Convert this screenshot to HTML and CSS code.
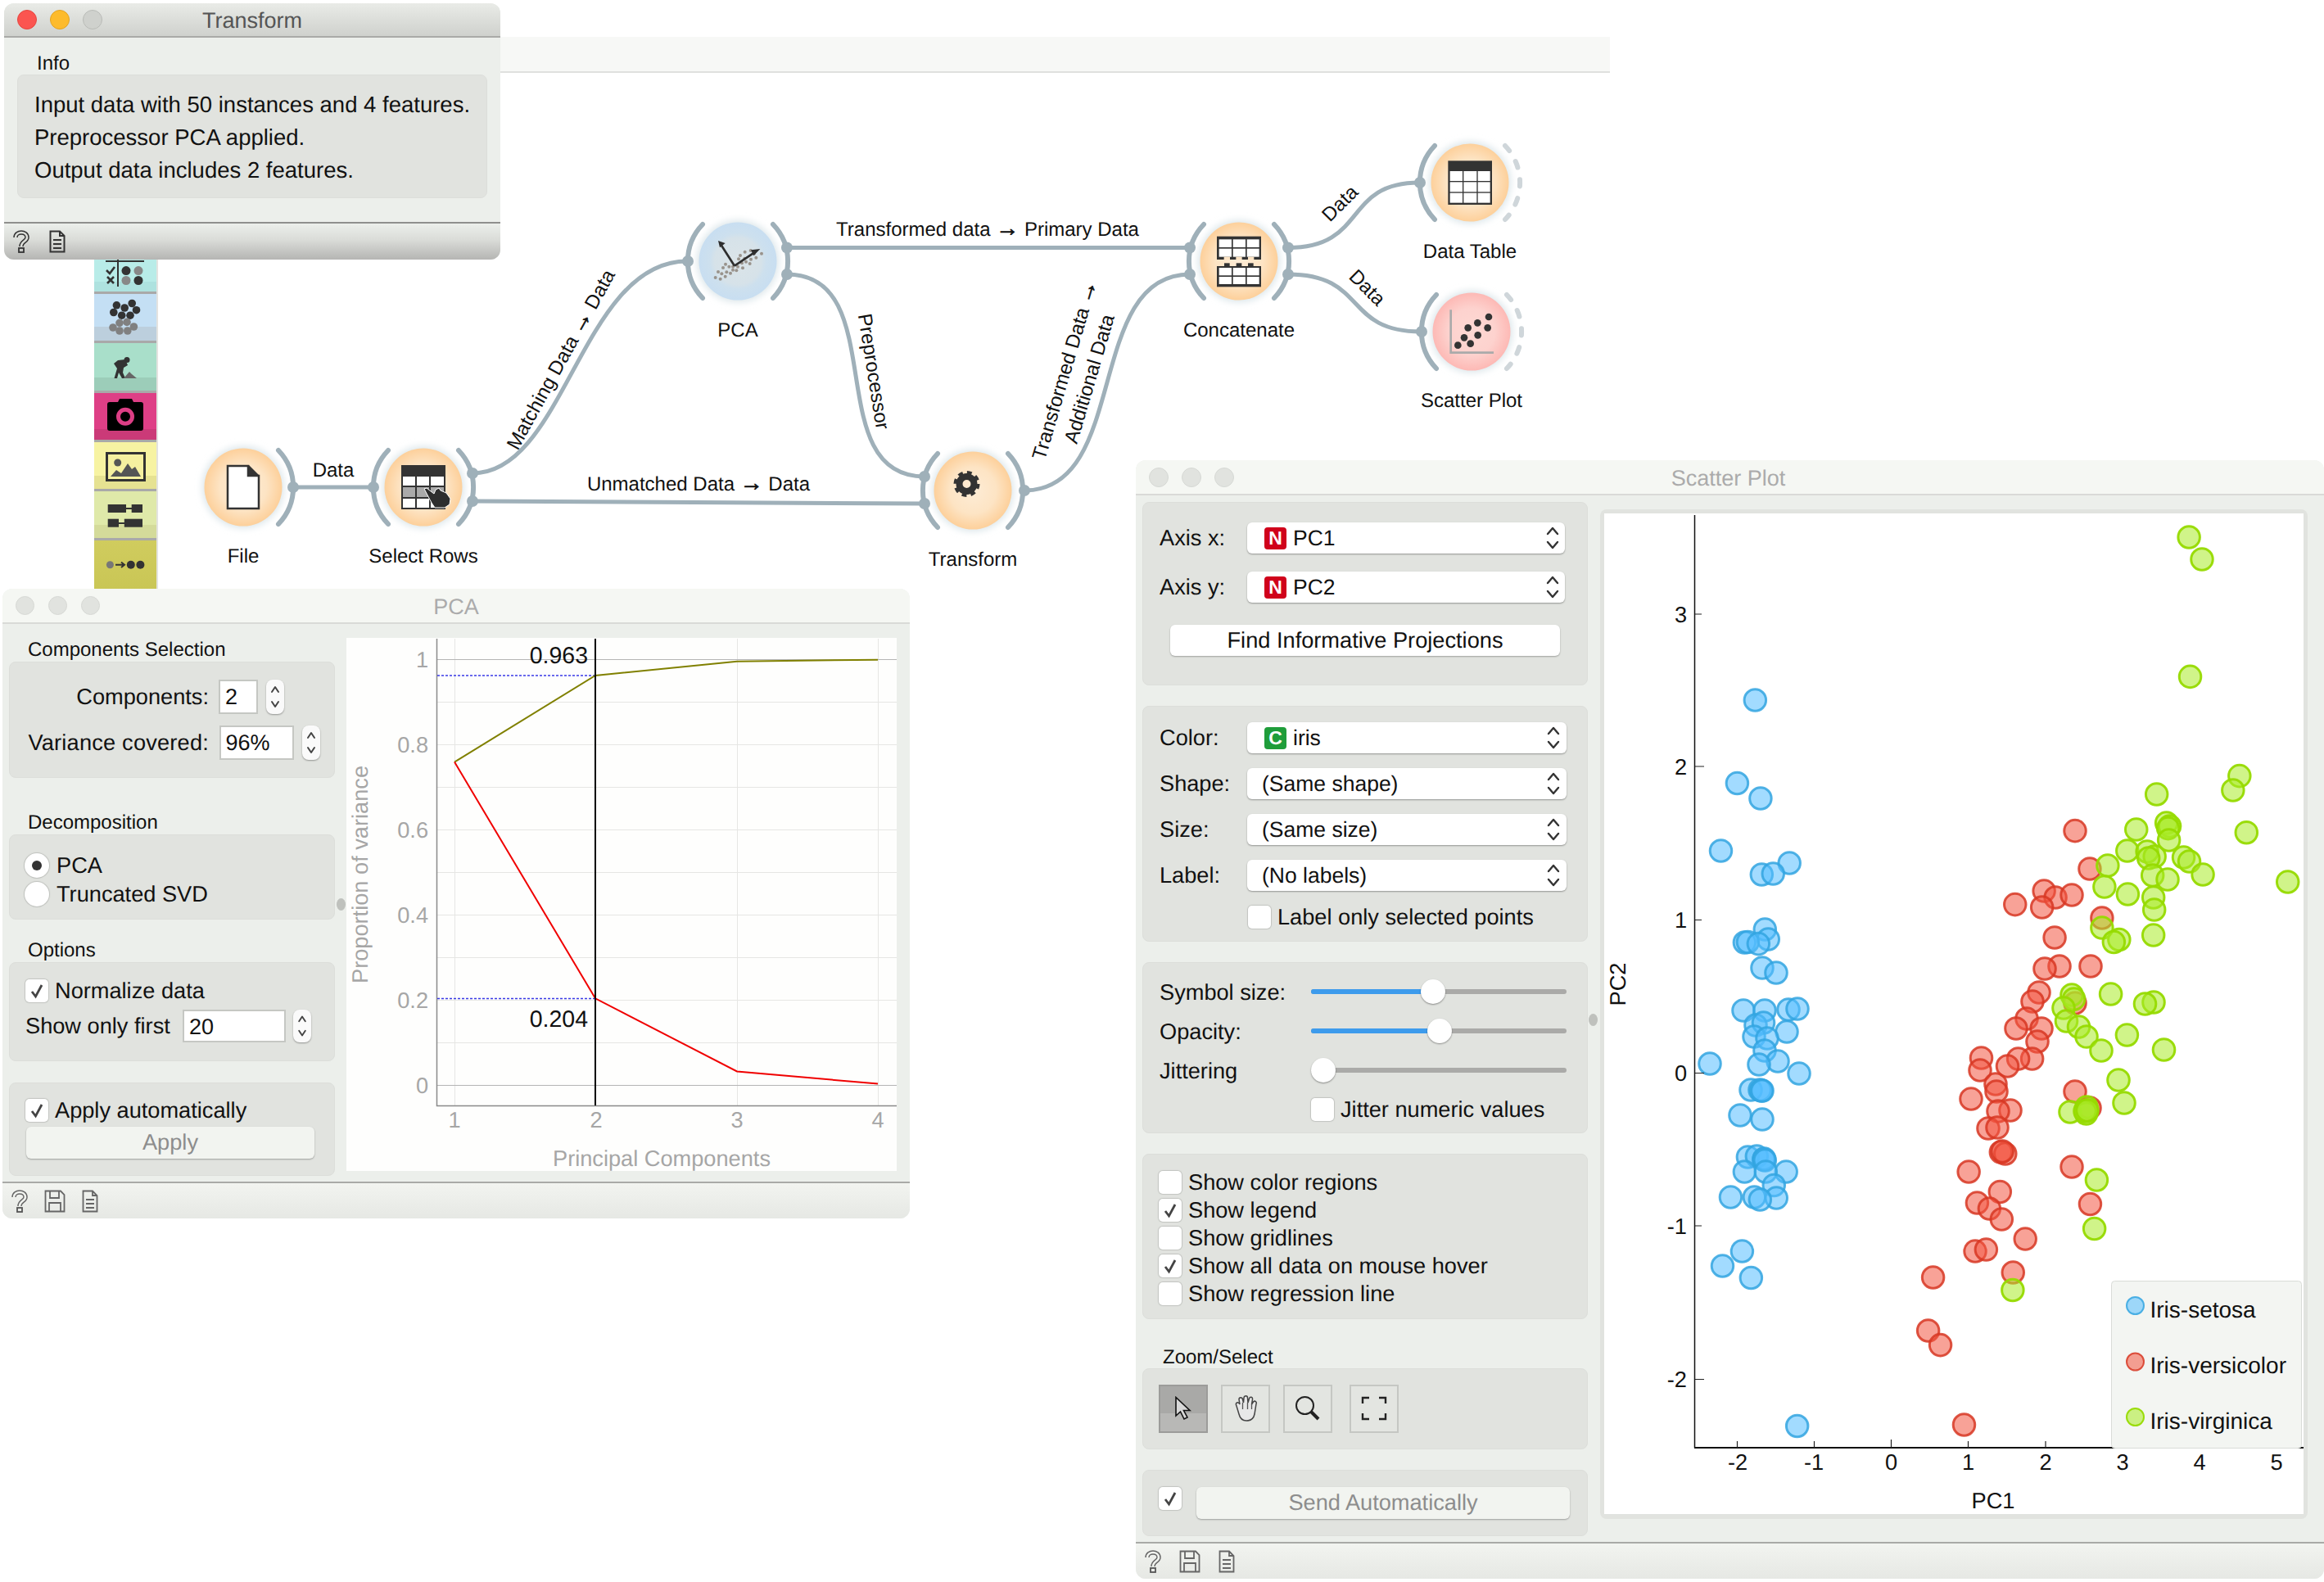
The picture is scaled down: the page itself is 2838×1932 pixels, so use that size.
FILE: index.html
```html
<!DOCTYPE html>
<html lang="en">
<head>
<meta charset="utf-8">
<title>Orange workflow</title>
<link rel="stylesheet" href="styles.css">
</head>
<body>
<svg class="defs" width="0" height="0" aria-hidden="true">
  <defs>
    <radialGradient id="gOrange"><stop offset="0" stop-color="#fdecd6"/><stop offset=".6" stop-color="#fde4c4"/><stop offset="1" stop-color="#fdd09b"/></radialGradient>
    <radialGradient id="gBlue"><stop offset="0" stop-color="#dbe4e8"/><stop offset=".6" stop-color="#d6e2e9"/><stop offset=".72" stop-color="#cde0ee"/><stop offset="1" stop-color="#c8def1"/></radialGradient>
    <radialGradient id="gPink"><stop offset="0" stop-color="#fdd8d3"/><stop offset=".6" stop-color="#fdd2ce"/><stop offset="1" stop-color="#fdb9b5"/></radialGradient>
    <filter id="soft" x="-30%" y="-30%" width="160%" height="160%"><feGaussianBlur stdDeviation="4"/></filter>
    <symbol id="chev" viewBox="0 0 16 30"><path d="M2 10 L8 3 L14 10 M2 20 L8 27 L14 20" fill="none" stroke="#333" stroke-width="2.4" stroke-linecap="round" stroke-linejoin="round"/></symbol>
    <symbol id="chevs" viewBox="0 0 22 42"><path d="M7 15 L11 9 L15 15 M7 27 L11 33 L15 27" fill="none" stroke="#444" stroke-width="2" stroke-linecap="round" stroke-linejoin="round"/></symbol>
    <symbol id="tick" viewBox="0 0 28 28"><path d="M8 15 L12.5 21 L20 7" fill="none" stroke="#444" stroke-width="2.8"/></symbol>
    <symbol id="help" viewBox="0 0 20 28"><path d="M3 9 C3 1 17 1 17 9 C17 14 10 13 10 20" fill="none" stroke="#666" stroke-width="5.5"/><path d="M3 9 C3 1 17 1 17 9 C17 14 10 13 10 20" fill="none" stroke="#f1f3ef" stroke-width="2.6"/><rect x="7" y="22" width="6" height="5" fill="none" stroke="#555" stroke-width="1.8"/></symbol>
    <symbol id="helpd" viewBox="0 0 20 28"><path d="M3 9 C3 1 17 1 17 9 C17 14 10 13 10 20" fill="none" stroke="#333" stroke-width="5.5"/><path d="M3 9 C3 1 17 1 17 9 C17 14 10 13 10 20" fill="none" stroke="#dcded9" stroke-width="2.6"/><rect x="7" y="22" width="6" height="5" fill="none" stroke="#333" stroke-width="1.8"/></symbol>
    <symbol id="doc" viewBox="0 0 20 28"><path d="M1.5 1.5 H13 L18.500 7 V26.500 H1.500 Z M13 1.500 V7 H18.500 M5 12 H15 M5 17 H15 M5 22 H15" fill="none" stroke="#666" stroke-width="1.8"/></symbol>
    <symbol id="docd" viewBox="0 0 20 28"><path d="M1.5 1.5 H13 L18.500 7 V26.500 H1.500 Z M13 1.500 V7 H18.500 M5 12 H15 M5 17 H15 M5 22 H15" fill="none" stroke="#333" stroke-width="2"/></symbol>
    <symbol id="save" viewBox="0 0 26 28"><path d="M1.500 1.500 H20 L24.500 6 V26.500 H1.500 Z M7 1.500 V10 H18 V1.500 M6 26.500 V16 H20 V26.500" fill="none" stroke="#666" stroke-width="1.8"/></symbol>
    <g id="arcL"><path d="M-43,-45 A65,65 0 0 0 -43,45" class="arc"/></g>
    <g id="arcR"><path d="M43,-45 A65,65 0 0 1 43,45" class="arc"/></g>
    <g id="arcD"><path d="M43,-45 A65,65 0 0 1 43,45" class="arcdash"/></g>
  </defs>
</svg>

<div class="toolbar"></div>

<aside class="sidebar">
  <div class="cat c1"><svg viewBox="0 0 76 42" width="76" height="42"><path d="M14 2 H61 M29 0 V33" stroke="#333" stroke-width="2" fill="none"/><path d="M15 13 L19 17 L25 9 M16 21 L24 29 M24 21 L16 29" stroke="#333" stroke-width="2.600" fill="none"/><circle cx="39" cy="13.600" r="5.500" fill="#333"/><circle cx="54" cy="13.600" r="5.500" fill="#888"/><circle cx="39" cy="25.500" r="5.500" fill="#888"/><circle cx="54" cy="25.500" r="5.500" fill="#333"/></svg></div>
  <div class="cat c2"><svg viewBox="0 0 76 60" width="76" height="60"><g fill="#333"><circle cx="27.400" cy="13.800" r="4.800"/><circle cx="46.200" cy="11.500" r="4.800"/><circle cx="37.200" cy="17" r="4.800"/><circle cx="51.500" cy="19.700" r="4.800"/><circle cx="23.800" cy="22.500" r="4.800"/><circle cx="33.700" cy="26.200" r="4.800"/><circle cx="44" cy="26.200" r="4.800"/></g><g fill="#808080"><circle cx="31" cy="35.300" r="4.800"/><circle cx="40" cy="34.400" r="4.800"/><circle cx="48.400" cy="40" r="4.800"/><circle cx="23" cy="41" r="4.800"/><circle cx="31" cy="45" r="4.800"/><circle cx="40.800" cy="45" r="4.800"/></g></svg></div>
  <div class="cat c3"><svg viewBox="0 0 76 61" width="76" height="61"><circle cx="40" cy="20.500" r="3.500" fill="#333"/><path d="M29 21 L38 20 L41 27 L36 30 L35 36 L38 43 L34 43 L30 36 L28 43 L24.500 43 L28 31 L24 25 Z" fill="#333"/><path d="M36 43 L43 35 L46 38 L52 43 Z" fill="#666"/></svg></div>
  <div class="cat c4"><svg viewBox="0 0 76 60" width="76" height="60"><path d="M19 11 H29 L31 7 H46 L48 11 H57 Q60 11 60 14 V43 Q60 46 57 46 H19 Q16 46 16 43 V14 Q16 11 19 11 Z" fill="#000"/><circle cx="38" cy="28.700" r="8.500" fill="none" stroke="#dd3e85" stroke-width="5"/></svg></div>
  <div class="cat c5"><svg viewBox="0 0 76 60" width="76" height="60"><rect x="15.500" y="13.500" width="46" height="33" fill="#f5f0a0" stroke="#333" stroke-width="3"/><circle cx="28.700" cy="25" r="4.500" fill="#555"/><path d="M20 42 L27 34 L33 38 L41 26 L46 33 L50 30 L57 42 Z" fill="#555"/></svg></div>
  <div class="cat c6"><svg viewBox="0 0 76 60" width="76" height="60"><g fill="#333"><rect x="16.700" y="16" width="22.300" height="10"/><rect x="45.700" y="16" width="13.300" height="10"/><rect x="39" y="20" width="7" height="2"/><rect x="16.700" y="33.700" width="13.300" height="10"/><rect x="36.800" y="33.700" width="22.200" height="10"/><rect x="30" y="38" width="7" height="2"/></g></svg></div>
  <div class="cat c7"><svg viewBox="0 0 76 61" width="76" height="61"><circle cx="19.400" cy="29.700" r="4.500" fill="#777"/><path d="M26 29.700 H36 M33 26.500 L37 29.700 L33 33" stroke="#333" stroke-width="2" fill="none"/><circle cx="44.800" cy="29.700" r="5" fill="#333"/><circle cx="56.400" cy="29.700" r="5" fill="#333"/></svg></div>
</aside>

<svg class="canvas" viewBox="0 0 2000 720" width="2000" height="720">
  <g class="edges">
    <path d="M358,595 H454"/>
    <path d="M577,578 C690,578 710,319 839,319"/>
    <path d="M577,612 L1129,615"/>
    <path d="M961,302.500 H1453"/>
    <path d="M961,335 C1090,335 1000,582 1129,582"/>
    <path d="M1251,599 C1380,599 1324,335 1453,335"/>
    <path d="M1573,302.500 C1670,302.500 1640,223 1733,223"/>
    <path d="M1573,335 C1670,335 1640,405 1735,405"/>
  </g>

  <g class="elabels">
    <text x="407" y="582">Data</text>
    <text x="1206" y="287.500">Transformed data <tspan class="arr">→</tspan> Primary Data</text>
    <text x="853" y="598.500">Unmatched Data <tspan class="arr">→</tspan> Data</text>
    <text transform="translate(692 443) rotate(-61)">Matching Data <tspan class="arr">→</tspan> Data</text>
    <text transform="translate(1059 455) rotate(81)">Preprocessor</text>
    <text transform="translate(1308 454) rotate(-73.500)">Transformed Data <tspan class="arr">→</tspan></text>
    <text transform="translate(1338 465) rotate(-73.500)">Additional Data</text>
    <text transform="translate(1642 254) rotate(-45)">Data</text>
    <text transform="translate(1664 357) rotate(45)">Data</text>
  </g>

  <g transform="translate(297 595)">
    <circle class="halo" r="50"/><circle r="47.500" fill="url(#gOrange)"/>
    <use href="#arcR"/><circle class="dot" cx="61" r="7"/>
    <path d="M-19,-26 H6 V-14 H19 V26 H-19 Z" fill="#fff" stroke="#333" stroke-width="2.500"/><path d="M7,-27 L19,-15 H7 Z" fill="#333"/>
  </g>

  <g transform="translate(517 595)">
    <circle class="halo" r="50"/><circle r="47.500" fill="url(#gOrange)"/>
    <use href="#arcL"/><use href="#arcR"/>
    <circle class="dot" cx="-61" r="7"/><circle class="dot" cx="60" cy="-17" r="7"/><circle class="dot" cx="60" cy="17" r="7"/>
    <rect x="-27" y="-27" width="54" height="54" fill="#333"/>
    <g fill="#fff"><rect x="-25" y="-13" width="15" height="11"/><rect x="-8" y="-13" width="15" height="11"/><rect x="9" y="-13" width="16" height="11"/><rect x="-25" y="14" width="15" height="11"/><rect x="-8" y="14" width="15" height="11"/><rect x="9" y="14" width="16" height="11"/></g>
    <g fill="#aaa"><rect x="-25" y="0" width="15" height="12"/><rect x="-8" y="0" width="15" height="12"/><rect x="9" y="0" width="16" height="12"/></g>
    <path d="M1,2 L4,1 L13,8 L15,3 L19,1 L21,4 L28,7 L33,14 L32,21 L26,25 L14,25 L10,19 Z" fill="#2e2e2e" stroke="#fff" stroke-width="1"/>
  </g>

  <g transform="translate(901 319)">
    <circle class="halo" r="50"/><circle r="47.500" fill="url(#gBlue)"/>
    <use href="#arcL"/><use href="#arcR"/>
    <circle class="dot" cx="-61" r="7"/><circle class="dot" cx="60" cy="-16.500" r="7"/><circle class="dot" cx="60" cy="16" r="7"/>
    <g transform="scale(.3333) translate(-240 -238)">
      <g fill="#99938c"><circle cx="158" cy="298" r="6"/><circle cx="176" cy="303" r="6"/><circle cx="194" cy="294" r="6"/><circle cx="168" cy="277" r="6"/><circle cx="181" cy="284" r="6"/><circle cx="199" cy="278" r="6"/><circle cx="213" cy="282" r="6"/><circle cx="222" cy="270" r="6"/><circle cx="235" cy="272" r="6"/><circle cx="186" cy="262" r="6"/><circle cx="195" cy="249" r="6"/><circle cx="208" cy="258" r="6"/><circle cx="222" cy="258" r="6"/><circle cx="240" cy="258" r="6"/><circle cx="258" cy="263" r="6"/><circle cx="243" cy="230" r="6"/><circle cx="249" cy="217" r="6"/><circle cx="266" cy="204" r="6"/><circle cx="287" cy="199" r="6"/><circle cx="284" cy="247" r="6"/><circle cx="270" cy="240" r="6"/><circle cx="288" cy="231" r="6"/><circle cx="307" cy="225" r="6"/><circle cx="327" cy="210" r="6"/><circle cx="255" cy="245" r="6"/><circle cx="265" cy="228" r="6"/><circle cx="300" cy="210" r="6"/></g>
      <path d="M228,255 L180,180 M228,255 L305,203" stroke="#2e2e2e" stroke-width="8" fill="none"/>
      <path d="M168,163 L194,172 L174,188 Z M322,193 L298,218 L288,197 Z" fill="#2e2e2e"/>
    </g>
  </g>

  <g transform="translate(1513 319)">
    <circle class="halo" r="50"/><circle r="47.500" fill="url(#gOrange)"/>
    <use href="#arcL"/><use href="#arcR"/>
    <circle class="dot" cx="-60" cy="-16.500" r="7"/><circle class="dot" cx="-60" cy="16" r="7"/><circle class="dot" cx="60" cy="-16.500" r="7"/><circle class="dot" cx="60" cy="16" r="7"/>
    <g transform="scale(.3333) translate(-219 -506)">
      <rect x="138" y="415" width="162" height="85" fill="#333"/><rect x="138" y="524" width="162" height="76" fill="#333"/>
      <g fill="#fff"><rect x="146" y="426" width="46" height="29"/><rect x="197" y="426" width="46" height="29"/><rect x="248" y="426" width="45" height="29"/><rect x="146" y="460" width="46" height="30"/><rect x="197" y="460" width="46" height="30"/><rect x="248" y="460" width="45" height="30"/>
      <rect x="146" y="530" width="46" height="28"/><rect x="197" y="530" width="46" height="28"/><rect x="248" y="530" width="45" height="28"/><rect x="146" y="563" width="46" height="27"/><rect x="197" y="563" width="46" height="27"/><rect x="248" y="563" width="45" height="27"/></g>
      <g fill="#fde4c4"><rect x="164" y="490" width="22" height="10"/><rect x="208" y="490" width="22" height="10"/><rect x="252" y="490" width="22" height="10"/></g>
      <g fill="#333"><rect x="165" y="513" width="20" height="11"/><rect x="209" y="513" width="20" height="11"/><rect x="252" y="513" width="20" height="11"/></g>
    </g>
  </g>

  <g transform="translate(1188 599)">
    <circle class="halo" r="50"/><circle r="47.500" fill="url(#gOrange)"/>
    <use href="#arcL"/><use href="#arcR"/>
    <circle class="dot" cx="-59" cy="-17" r="7"/><circle class="dot" cx="-59" cy="16" r="7"/><circle class="dot" cx="63" r="7"/>
    <g transform="translate(-7.500 -8)">
      <circle r="9" fill="none" stroke="#333" stroke-width="8"/>
      <circle r="13.500" fill="none" stroke="#333" stroke-width="5" stroke-dasharray="5.600 5"/>
    </g>
  </g>

  <g transform="translate(1795 223)">
    <circle class="halo" r="50"/><circle r="47.500" fill="url(#gOrange)"/>
    <use href="#arcL"/><use href="#arcD"/>
    <circle class="dot" cx="-61" r="7"/>
    <g transform="scale(.3333) translate(-1065 -218)">
      <rect x="985" y="138" width="161" height="161" fill="#333"/>
      <g fill="#fff"><rect x="992" y="176" width="46" height="36"/><rect x="1042" y="176" width="48" height="36"/><rect x="1094" y="176" width="45" height="36"/><rect x="992" y="216" width="46" height="36"/><rect x="1042" y="216" width="48" height="36"/><rect x="1094" y="216" width="45" height="36"/><rect x="992" y="256" width="46" height="36"/><rect x="1042" y="256" width="48" height="36"/><rect x="1094" y="256" width="45" height="36"/></g>
    </g>
  </g>

  <g transform="translate(1797 405)">
    <circle class="halo" r="50"/><circle r="47.500" fill="url(#gPink)"/>
    <use href="#arcL"/><use href="#arcD"/>
    <circle class="dot" cx="-61" r="7"/>
    <g transform="scale(.3333) translate(-1071 -765)">
      <path d="M995,685 V842 H1152" fill="none" stroke="#aaa" stroke-width="8"/>
      <g fill="#333"><circle cx="1134" cy="711" r="13"/><circle cx="1093" cy="733" r="13"/><circle cx="1058" cy="751" r="13"/><circle cx="1130" cy="751" r="13"/><circle cx="1044" cy="787" r="13"/><circle cx="1094" cy="778" r="13"/><circle cx="1021" cy="815" r="13"/><circle cx="1067" cy="809" r="13"/></g>
    </g>
  </g>

  <g class="ntitles">
    <text x="297" y="686.500">File</text>
    <text x="517" y="686.500">Select Rows</text>
    <text x="901" y="411">PCA</text>
    <text x="1513" y="411">Concatenate</text>
    <text x="1188" y="691">Transform</text>
    <text x="1795" y="315">Data Table</text>
    <text x="1797" y="497">Scatter Plot</text>
  </g>
</svg>

<section class="win win-transform">
  <header class="titlebar tb-active">
    <div class="lights"><i class="l red"></i><i class="l yellow"></i><i class="l off"></i></div>
    <h1 class="title dark">Transform</h1>
    <span></span>
  </header>
  <div class="t-body">
    <div class="glabel info-label">Info</div>
    <div class="group info-box">
      <p>Input data with 50 instances and 4 features.</p>
      <p>Preprocessor PCA applied.</p>
      <p>Output data includes 2 features.</p>
    </div>
  </div>
  <footer class="foot foot-active">
    <svg class="ic" width="20" height="28"><use href="#helpd"/></svg>
    <svg class="ic" width="20" height="28"><use href="#docd"/></svg>
  </footer>
</section>

<section class="win win-pca">
  <header class="titlebar tb-idle pca-tb">
    <div class="lights"><i class="l idle"></i><i class="l idle"></i><i class="l idle"></i></div>
    <h1 class="title">PCA</h1>
    <span></span>
  </header>
  <div class="pca-body">
    <div class="pca-controls">
      <div class="glabel">Components Selection</div>
      <div class="group g-comp">
        <div class="row"><span class="r-label">Components:</span><span class="input w48">2</span><span class="spin"><svg width="22" height="42"><use href="#chevs"/></svg></span></div>
        <div class="row row2"><span class="r-label">Variance covered:</span><span class="input w91">96%</span><span class="spin"><svg width="22" height="42"><use href="#chevs"/></svg></span></div>
      </div>
      <div class="glabel gl-dec">Decomposition</div>
      <div class="group g-dec">
        <div class="radio"><i class="rd on"></i>PCA</div>
        <div class="radio"><i class="rd"></i>Truncated SVD</div>
      </div>
      <div class="glabel gl-opt">Options</div>
      <div class="group g-opt">
        <div class="chk"><i class="cb"><svg width="28" height="28"><use href="#tick"/></svg></i>Normalize data</div>
        <div class="row row-first"><span class="first-label">Show only first</span><span class="input w126">20</span><span class="spin"><svg width="22" height="40"><use href="#chevs"/></svg></span></div>
      </div>
      <div class="group g-apply">
        <div class="chk"><i class="cb"><svg width="28" height="28"><use href="#tick"/></svg></i>Apply automatically</div>
        <div class="btn btn-apply">Apply</div>
      </div>
    </div>
    <i class="split split-pca"></i>
    <svg class="pca-plot" viewBox="423 779 672 651" width="672" height="651">
      <rect x="423" y="779" width="672" height="651" fill="#fefefd"/>
      <g class="grid">
        <path d="M534 857.500 H1095 M534 909.500 H1095 M534 961.500 H1095 M534 1013.500 H1095 M534 1065.500 H1095 M534 1117.500 H1095 M534 1169.500 H1095 M534 1221.500 H1095 M534 1273.500 H1095"/>
        <path d="M555.500 780 V1350 M900.500 780 V1350 M1072.500 780 V1350"/>
      </g>
      <path d="M534 805.500 H1095 M534 1325.500 H1095" stroke="#b5b5b5" stroke-width="1" fill="none"/>
      <path d="M533.500 780 V1350.500 H1095" stroke="#8a8a8a" stroke-width="1.500" fill="none"/>
      <path d="M534 825 H727 M534 1219.500 H727" stroke="#3a3ae6" stroke-width="1.500" stroke-dasharray="3 2" fill="none"/>
      <path d="M555 930.600 L727 824.900 L900 807.700 L1072 805.700" stroke="#808000" stroke-width="2" fill="none"/>
      <path d="M555 930.600 L727 1219.300 L900 1308.500 L1072 1323.600" stroke="#f00000" stroke-width="2" fill="none"/>
      <path d="M727 780 V1350" stroke="#000" stroke-width="2"/>
      <g class="t27 gray end">
        <text x="523" y="815">1</text><text x="523" y="919">0.8</text><text x="523" y="1023">0.6</text><text x="523" y="1127">0.4</text><text x="523" y="1231">0.2</text><text x="523" y="1335">0</text>
      </g>
      <g class="t27 gray mid">
        <text x="555" y="1377">1</text><text x="728" y="1377">2</text><text x="900" y="1377">3</text><text x="1072" y="1377">4</text>
        <text x="808" y="1424">Principal Components</text>
        <text transform="translate(449 1068) rotate(-90)">Proportion of variance</text>
      </g>
      <g class="t285 end"><text x="718" y="810">0.963</text><text x="718" y="1254">0.204</text></g>
    </svg>
  </div>
  <footer class="foot foot-idle foot-pca">
    <svg class="ic" width="20" height="28"><use href="#help"/></svg>
    <svg class="ic" width="26" height="28"><use href="#save"/></svg>
    <svg class="ic" width="20" height="28"><use href="#doc"/></svg>
  </footer>
</section>

<section class="win win-scatter">
  <header class="titlebar tb-idle sc-tb">
    <div class="lights"><i class="l idle big"></i><i class="l idle big"></i><i class="l idle big"></i></div>
    <h1 class="title">Scatter Plot</h1>
    <span></span>
  </header>
  <div class="sc-body">
    <div class="sc-controls">
      <div class="group sg1">
        <div class="frow"><span class="f-label">Axis x:</span><span class="combo cw388"><b class="badge n">N</b>PC1<svg class="cv" width="16" height="30"><use href="#chev"/></svg></span></div>
        <div class="frow fr22"><span class="f-label">Axis y:</span><span class="combo cw388"><b class="badge n">N</b>PC2<svg class="cv" width="16" height="30"><use href="#chev"/></svg></span></div>
        <div class="btn btn-find">Find Informative Projections</div>
      </div>
      <div class="group sg2">
        <div class="frow"><span class="f-label">Color:</span><span class="combo cw390"><b class="badge c">C</b>iris<svg class="cv" width="16" height="30"><use href="#chev"/></svg></span></div>
        <div class="frow fr18"><span class="f-label">Shape:</span><span class="combo cw390 plain">(Same shape)<svg class="cv" width="16" height="30"><use href="#chev"/></svg></span></div>
        <div class="frow fr18"><span class="f-label">Size:</span><span class="combo cw390 plain">(Same size)<svg class="cv" width="16" height="30"><use href="#chev"/></svg></span></div>
        <div class="frow fr18"><span class="f-label">Label:</span><span class="combo cw390 plain">(No labels)<svg class="cv" width="16" height="30"><use href="#chev"/></svg></span></div>
        <div class="chk chk-sel"><i class="cb"></i>Label only selected points</div>
      </div>
      <div class="group sg3">
        <div class="srow"><span class="s-label">Symbol size:</span><span class="slider"><i class="fill f1"></i><i class="knob k1"></i></span></div>
        <div class="srow sr18"><span class="s-label">Opacity:</span><span class="slider"><i class="fill f2"></i><i class="knob k2"></i></span></div>
        <div class="srow sr18"><span class="s-label">Jittering</span><span class="slider"><i class="knob k3"></i></span></div>
        <div class="chk chk-jit"><i class="cb"></i>Jitter numeric values</div>
      </div>
      <div class="group sg4">
        <div class="chk c34"><i class="cb"></i>Show color regions</div>
        <div class="chk c34"><i class="cb"><svg width="28" height="28"><use href="#tick"/></svg></i>Show legend</div>
        <div class="chk c34"><i class="cb"></i>Show gridlines</div>
        <div class="chk c34"><i class="cb"><svg width="28" height="28"><use href="#tick"/></svg></i>Show all data on mouse hover</div>
        <div class="chk c34"><i class="cb"></i>Show regression line</div>
      </div>
      <div class="glabel gl-zoom">Zoom/Select</div>
      <div class="group sg5">
        <span class="tool sel"><svg width="22" height="30" viewBox="0 0 22 30"><path d="M2 1.500 V24 L7.500 19 L12 28 L16 26 L11.500 17.500 H19 Z" fill="#d8d8d8" stroke="#111" stroke-width="1.600"/></svg></span>
        <span class="tool"><svg width="32" height="32" viewBox="0 0 32 32"><path d="M5 13 C3 9 7 7 9 11 L8 5 C8 2 12 2 12.500 5 L13.500 9 L14 3 C14.500 0 18.500 0 18.500 3 L19 9 L20.500 4 C21.500 1 25 2 24.500 5 L23.500 11 L25.500 8 C27.500 6 30 8 29 10.500 L27 23 C26 28 23 31 17 31 C11 31 9 27 8 23 Z" fill="#e8e8e8" stroke="#444" stroke-width="1.500"/><path d="M12.500 9 V17 M18.500 9 V17 M23.500 11 V17" stroke="#555" stroke-width="1.300"/></svg></span>
        <span class="tool"><svg width="32" height="32" viewBox="0 0 32 32"><circle cx="12.500" cy="12.500" r="10.500" fill="none" stroke="#222" stroke-width="2"/><path d="M20 20 L29 29" stroke="#222" stroke-width="4"/></svg></span>
        <span class="tool t-last"><svg width="32" height="30" viewBox="0 0 32 30"><path d="M2 9 V2 H10 M22 2 H30 V9 M2 21 V28 H10 M22 28 H30 V21" fill="none" stroke="#222" stroke-width="2.400"/></svg></span>
      </div>
      <div class="group sg6">
        <i class="cb"><svg width="28" height="28"><use href="#tick"/></svg></i>
        <div class="btn btn-send">Send Automatically</div>
      </div>
    </div>
    <i class="split split-sc"></i>
    <div class="sc-frame">
      <svg class="sc-plot" viewBox="1959 627 854 1222" width="854" height="1222">
        <rect x="1959" y="627" width="854" height="1222" fill="#fff"/>
        <g class="pts b">
          <g transform="translate(6.630 0) scale(.9966 1)">
          <circle cx="2144" cy="855"/><circle cx="2122" cy="956.500"/><circle cx="2150.600" cy="975"/><circle cx="2102" cy="1039"/><circle cx="2186" cy="1054"/><circle cx="2152" cy="1068"/><circle cx="2166" cy="1067"/><circle cx="2156" cy="1135"/><circle cx="2160" cy="1147"/><circle cx="2131" cy="1151"/><circle cx="2135" cy="1150.500"/><circle cx="2148" cy="1152.600"/>
          <circle cx="2135" cy="1413"/><circle cx="2146" cy="1412"/><circle cx="2154.500" cy="1416"/><circle cx="2155" cy="1415"/><circle cx="2156" cy="1417"/><circle cx="2131" cy="1431"/><circle cx="2182" cy="1431"/><circle cx="2157" cy="1431"/><circle cx="2167" cy="1447.500"/><circle cx="2170" cy="1463"/><circle cx="2114" cy="1462"/><circle cx="2143" cy="1462"/><circle cx="2150" cy="1465"/><circle cx="2128" cy="1528"/><circle cx="2104" cy="1546"/><circle cx="2139" cy="1560.500"/><circle cx="2195.500" cy="1741.500"/>
          </g>
          <circle cx="2152" cy="1182"/><circle cx="2169" cy="1188"/>
          <circle cx="2129" cy="1234"/><circle cx="2155" cy="1234"/><circle cx="2184" cy="1233"/><circle cx="2195" cy="1232"/><circle cx="2144" cy="1252"/><circle cx="2153.500" cy="1249"/><circle cx="2182" cy="1260"/><circle cx="2142" cy="1266"/><circle cx="2158" cy="1268"/><circle cx="2155" cy="1283"/><circle cx="2171" cy="1296"/><circle cx="2148" cy="1300"/><circle cx="2197" cy="1311"/><circle cx="2088" cy="1299"/><circle cx="2138" cy="1331"/><circle cx="2149" cy="1331"/><circle cx="2151" cy="1332"/><circle cx="2152" cy="1332"/><circle cx="2125" cy="1362"/><circle cx="2152" cy="1367"/>
        </g>
        <g class="pts r">
          <g transform="translate(6.630 0) scale(.9966 1)">
          <circle cx="2536" cy="1014.600"/><circle cx="2554" cy="1061"/><circle cx="2498" cy="1088"/><circle cx="2512" cy="1096"/><circle cx="2532" cy="1093"/><circle cx="2462.500" cy="1104.600"/><circle cx="2495.500" cy="1108"/><circle cx="2569" cy="1121"/><circle cx="2511" cy="1145"/>
          <circle cx="2445" cy="1407"/><circle cx="2450.500" cy="1409"/><circle cx="2447" cy="1406"/><circle cx="2405.700" cy="1431"/><circle cx="2532" cy="1425"/><circle cx="2444" cy="1455.500"/><circle cx="2416" cy="1469"/><circle cx="2431" cy="1476"/><circle cx="2446" cy="1489"/><circle cx="2554.500" cy="1470.500"/><circle cx="2475" cy="1513"/><circle cx="2413.600" cy="1528"/><circle cx="2427" cy="1526"/><circle cx="2460" cy="1554"/><circle cx="2362" cy="1560"/><circle cx="2356" cy="1625"/><circle cx="2371" cy="1642.600"/><circle cx="2400" cy="1740"/>
          </g>
          <circle cx="2515" cy="1180"/><circle cx="2497" cy="1183"/><circle cx="2553" cy="1180"/>
          <circle cx="2490" cy="1212"/><circle cx="2482" cy="1223"/><circle cx="2534" cy="1225"/><circle cx="2475" cy="1244"/><circle cx="2462" cy="1256"/><circle cx="2493" cy="1256"/><circle cx="2488" cy="1272"/><circle cx="2481.600" cy="1293"/><circle cx="2464.600" cy="1293"/><circle cx="2451.500" cy="1302"/><circle cx="2419.500" cy="1292"/><circle cx="2418" cy="1307"/><circle cx="2437" cy="1324"/><circle cx="2438" cy="1333"/><circle cx="2407" cy="1342"/><circle cx="2455" cy="1356"/><circle cx="2440" cy="1357"/><circle cx="2534" cy="1333"/><circle cx="2552" cy="1353"/>
          <circle cx="2428" cy="1378"/><circle cx="2439" cy="1377"/>
        </g>
        <g class="pts g">
          <g transform="translate(6.630 0) scale(.9966 1)">
          <circle cx="2675.600" cy="656"/><circle cx="2691.500" cy="683"/><circle cx="2677" cy="826.400"/><circle cx="2737.500" cy="947.600"/><circle cx="2729.500" cy="965"/><circle cx="2636" cy="970"/><circle cx="2648" cy="1005"/><circle cx="2652" cy="1009"/><circle cx="2650" cy="1011.600"/><circle cx="2611" cy="1013"/><circle cx="2746" cy="1016.700"/><circle cx="2651" cy="1026"/><circle cx="2600" cy="1039"/><circle cx="2624.400" cy="1040"/><circle cx="2633.500" cy="1046"/><circle cx="2626" cy="1048"/><circle cx="2669" cy="1047"/><circle cx="2676" cy="1052"/><circle cx="2692.600" cy="1068"/><circle cx="2576" cy="1057"/><circle cx="2631" cy="1069"/><circle cx="2649.400" cy="1074"/><circle cx="2796.600" cy="1077"/><circle cx="2572" cy="1083"/><circle cx="2600.600" cy="1092"/><circle cx="2632" cy="1096"/><circle cx="2633" cy="1111"/><circle cx="2569" cy="1133"/><circle cx="2590" cy="1147.500"/><circle cx="2583.500" cy="1150.500"/><circle cx="2632" cy="1142"/>
          <circle cx="2562.500" cy="1441"/><circle cx="2559.700" cy="1500.500"/><circle cx="2459.600" cy="1575.500"/>
          </g>
          <circle cx="2530" cy="1215"/><circle cx="2532.600" cy="1220"/><circle cx="2577.600" cy="1214"/><circle cx="2630" cy="1224"/><circle cx="2619.500" cy="1226"/><circle cx="2520" cy="1231"/><circle cx="2523.500" cy="1247"/><circle cx="2538.500" cy="1254"/><circle cx="2548" cy="1266"/><circle cx="2597.400" cy="1264"/><circle cx="2566" cy="1283"/><circle cx="2642.500" cy="1282"/><circle cx="2587" cy="1319"/><circle cx="2594" cy="1347"/><circle cx="2528" cy="1358"/><circle cx="2548" cy="1352"/><circle cx="2547.600" cy="1360"/><circle cx="2546" cy="1357"/><circle cx="2549" cy="1356"/>
        </g>
        <path d="M2069.500 629 V1768" stroke="#111" stroke-width="1.500" fill="none"/>
        <path d="M2069 1768 H2813" stroke="#111" stroke-width="2" fill="none"/>
        <path d="M2070 750 H2078 M2070 936 H2081 M2070 1123.500 H2078 M2070 1310.500 H2081 M2070 1497 H2078 M2070 1684.500 H2081 M2121.500 1768 V1760 M2215.500 1768 V1760 M2309.500 1768 V1758 M2403.500 1768 V1760 M2498 1768 V1760 M2592 1768 V1760 M2686 1768 V1760 M2780 1768 V1760" stroke="#222" stroke-width="1.200" fill="none"/>
        <g class="t27 end">
          <text x="2060" y="760">3</text><text x="2060" y="946">2</text><text x="2060" y="1133">1</text><text x="2060" y="1320">0</text><text x="2060" y="1507">-1</text><text x="2060" y="1694">-2</text>
        </g>
        <g class="t27 mid">
          <text x="2122" y="1795">-2</text><text x="2215" y="1795">-1</text><text x="2309.500" y="1795">0</text><text x="2403.500" y="1795">1</text><text x="2498" y="1795">2</text><text x="2592" y="1795">3</text><text x="2686" y="1795">4</text><text x="2780" y="1795">5</text>
          <text x="2434" y="1842">PC1</text>
          <text transform="translate(1985 1202) rotate(-90)">PC2</text>
        </g>
        <rect x="2578.500" y="1564.500" width="232" height="204" rx="4" fill="#f3f5f2" stroke="#d9dcd8"/>
        <circle class="lg b" cx="2607.500" cy="1594.500" r="10.500"/>
        <circle class="lg r" cx="2607.500" cy="1663" r="10.500"/>
        <circle class="lg g" cx="2607.500" cy="1730.500" r="10.500"/>
        <g class="t28">
          <text x="2625.500" y="1609">Iris-setosa</text><text x="2625.500" y="1677">Iris-versicolor</text><text x="2625.500" y="1745">Iris-virginica</text>
        </g>
      </svg>
    </div>
  </div>
  <footer class="foot foot-idle foot-sc">
    <svg class="ic" width="20" height="28"><use href="#help"/></svg>
    <svg class="ic" width="26" height="28"><use href="#save"/></svg>
    <svg class="ic" width="20" height="28"><use href="#doc"/></svg>
  </footer>
</section>
</body>
</html>
```
FILE: styles.css
```css
* { box-sizing: border-box; }
html, body { margin: 0; padding: 0; }
body {
  position: relative;
  width: 2838px;
  height: 1932px;
  overflow: hidden;
  background: #fff;
  font-family: "Liberation Sans", Arial, sans-serif;
  font-size: 27.200px;
  color: #111;
  text-rendering: geometricPrecision;
}
.defs { position: absolute; }
.toolbar {
  position: absolute;
  left: 611px; top: 45px;
  width: 1355px; height: 44px;
  background: #f7f8f6;
  border-bottom: 2px solid #dfe0de;
}
.sidebar {
  position: absolute;
  left: 115px; top: 317px;
  width: 78px;
  display: flex;
  flex-direction: column;
  border-right: 2px solid #e3e3e0;
}
.cat { display: block; border-bottom: 3px solid #a9a9a9; line-height: 0; overflow: hidden; }
.cat svg { display: block; }
.c1 { height: 42px; background: linear-gradient(#b8ece8 70%, #aee2df 70%); }
.c2 { height: 60px; background: linear-gradient(#c4dff4 70%, #bccfdd 70%); }
.c3 { height: 61px; background: linear-gradient(#a9dfca 72%, #9ccdb9 72%); }
.c4 { height: 60px; background: linear-gradient(#de3f86 78%, #cb3a78 78%); }
.c5 { height: 60px; background: linear-gradient(#f7f3a2 72%, #e6e292 72%); }
.c6 { height: 60px; background: linear-gradient(#dfe9a9 72%, #d4db9a 72%); }
.c7 { height: 61px; border-bottom: 0; background: linear-gradient(#d0cc5e, #c9c655); }

.canvas { position: absolute; left: 0; top: 0; }
.edges path { fill: none; stroke: #9fb0b9; stroke-width: 5px; }
.arc { fill: none; stroke: #9fb0b9; stroke-width: 6px; stroke-linecap: round; }
.arcdash { fill: none; stroke: #cfd6da; stroke-width: 6px; stroke-linecap: round; stroke-dasharray: 8 15; }
.dot { fill: #9fb0b9; }
.halo { fill: #dce6ea; filter: url(#soft); }
.elabels text { font-size: 24px; text-anchor: middle; fill: #111; }
.ntitles text { font-size: 24px; text-anchor: middle; fill: #111; }
.arr { stroke: #111; stroke-width: .8px; font-size: 28px; }

.win {
  position: absolute;
  display: flex;
  flex-direction: column;
  background: #ecefeb;
  border-radius: 12px;
  overflow: hidden;
}
.win-transform { left: 5px; top: 4px; width: 606px; height: 313px; }
.win-pca { left: 3px; top: 719px; width: 1108px; height: 769px; }
.win-scatter { left: 1387px; top: 562px; width: 1451px; height: 1366px; }

.titlebar {
  display: grid;
  grid-template-columns: 1fr auto 1fr;
  align-items: center;
  flex: none;
  height: 42px;
  border-bottom: 2px solid #a9aaa7;
}
.tb-active { background: linear-gradient(#e9ebe7, #cfd1cd); }
.tb-idle { background: #f5f7f3; border-bottom: 2px solid #d9dad7; }
.pca-tb { height: 43px; }
.sc-tb { height: 43px; }
.title { margin: 0; padding-top: 3px; font-size: 27px; font-weight: 400; color: #ababab; }
.sc-tb .title { padding-right: 4px; }
.title.dark { color: #555; }
.lights { display: flex; gap: 16px; padding-left: 16px; }
.pca-tb .lights { gap: 17px; padding-left: 16px; }
.sc-tb .lights { gap: 16px; padding-left: 16px; }
.l { display: block; width: 24px; height: 24px; border-radius: 50%; }
.red { background: #fb5550; border: 1px solid #e5463f; }
.yellow { background: #fdbb2c; border: 1px solid #e3a322; }
.off { background: #cfd1cd; border: 1px solid #b9bbb7; }
.idle { width: 23px; height: 23px; background: #e1e3df; border: 1px solid #d6d8d4; }
.idle.big { width: 24px; height: 24px; }

.group { background: #e1e3df; border: 1px solid #dcdeda; border-radius: 8px; }
.glabel { height: 30px; line-height: 33px; font-size: 24px; color: #111; padding-left: 23px; }

.t-body { flex: none; height: 225px; padding: 15px 16px 0; }
.info-label { padding-left: 24px; }
.info-box { height: 151px; padding: 16px 20px 0; }
.info-box p { margin: 0; line-height: 40px; font-size: 27.500px; white-space: nowrap; }

.foot { flex: 1; display: flex; align-items: center; }
.foot-active { border-top: 2px solid #8f8f8d; background: linear-gradient(#ecefeb, #dadcd8 45%, #b5b5b3); gap: 24px; padding-left: 11px; }
.foot-idle { border-top: 2px solid #a9aaa7; background: linear-gradient(#f2f4f0, #e6e8e4); }
.foot-pca { gap: 20px; padding-left: 11px; }
.foot-sc { gap: 22px; padding-left: 11px; }
.ic { display: block; flex: none; }

.pca-body { flex: none; height: 681px; display: flex; align-items: flex-start; position: relative; }
.pca-controls { flex: none; width: 420px; padding: 15px 0 0 8px; }
.pca-controls .group { width: 398px; margin-top: 1px; }
.g-comp { height: 142px; padding-top: 21px; }
.g-dec { height: 104px; padding: 19px 0 0 18px; }
.g-opt { height: 121px; padding: 19px 0 0 19px; }
.g-apply { height: 114px; padding: 18px 0 0 19px; margin-top: 26px !important; }
.gl-dec { margin-top: 38px; }
.gl-opt { margin-top: 21px; }
.row { display: flex; align-items: center; height: 42px; }
.row2 { margin-top: 14px; }
.r-label { width: 243px; text-align: right; margin-right: 12px; white-space: nowrap; }
.row2 .r-label { letter-spacing: .2px; margin-right: 12.500px; }
.input {
  display: block; height: 42px; line-height: 38px; padding: 0 6px;
  background: #fff; border: 2px solid #c5c7c3; font-size: 27px;
}
.w48 { width: 48px; }
.w91 { width: 91px; }
.w126 { width: 126px; height: 40px; }
.spin {
  display: block; width: 22px; height: 42px; margin-left: 10px;
  background: #fafafa; border-radius: 8px; box-shadow: 0 1px 2px rgba(0,0,0,.35); line-height: 0;
}
.spin svg { display: block; }
.radio { display: flex; align-items: center; height: 35px; gap: 9px; }
.rd { display: block; width: 30px; height: 30px; border-radius: 50%; background: #fff; box-shadow: 0 0 1px 1px #bfc1bd; position: relative; }
.rd.on::after { content: ""; position: absolute; left: 9px; top: 9px; width: 12px; height: 12px; border-radius: 50%; background: #333; }
.chk { display: flex; align-items: center; height: 30px; gap: 8px; }
.cb { display: block; flex: none; width: 28px; height: 28px; border-radius: 5px; background: #fff; box-shadow: 0 0 1px 1px #c2c4c0; line-height: 0; }
.cb svg { display: block; }
.row-first { height: 40px; margin-top: 8px; }
.first-label { width: 192px; white-space: nowrap; }
.row-first .spin { height: 40px; margin-left: 9px; }
.btn {
  background: #f2f4f0; border-radius: 6px; box-shadow: 0 1px 2px rgba(0,0,0,.3);
  text-align: center; color: #8d8d8d; height: 39px; line-height: 38px;
}
.btn-apply { width: 352px; margin: 5px 0 0 1px; }
.split { display: block; position: absolute; width: 11px; height: 15px; border-radius: 50%; background: #bfc1bd; }
.split-pca { left: 408px; top: 335px; }
.split-sc { left: 553px; top: 633px; }
.pca-plot { flex: none; display: block; margin-top: 17px; }

.t27 text { font-size: 27.200px; fill: #111; }
.t28 text { font-size: 28px; fill: #111; }
.t285 text { font-size: 28.500px; fill: #111; }
.gray text { fill: #a6a6a6; }
.end text { text-anchor: end; }
.mid text { text-anchor: middle; }
.grid path { stroke: #e6e6e4; stroke-width: 1px; fill: none; }

.sc-body { flex: none; height: 1278px; display: flex; align-items: flex-start; position: relative; }
.sc-controls { flex: none; width: 567px; padding: 8px 0 0 8px; }
.sc-controls > .group { width: 544px; padding-left: 19px; }
.sc-controls > .group + .group { margin-top: 25px; }
.sg1 { height: 224px; padding-top: 24px; }
.sg2 { height: 288px; padding-top: 19px; }
.sg3 { height: 209px; padding-top: 20px; }
.sg4 { height: 201.500px; padding-top: 17px; }
.gl-zoom { margin-top: 30px; padding-left: 25px; }
.sg5 { height: 99px; padding-top: 19px; display: flex; gap: 16px; align-items: flex-start; }
.sg6 { height: 81.500px; padding-top: 20px; display: flex; gap: 18px; align-items: flex-start; }
.frow { display: flex; align-items: center; height: 38px; }
.fr22 { margin-top: 22px; }
.fr18 { margin-top: 18px; }
.f-label { width: 108px; flex: none; padding-left: 1px; }
.combo {
  display: flex; align-items: center; position: relative; height: 38px;
  background: #fff; border-radius: 6px; box-shadow: 0 1px 2px rgba(0,0,0,.35);
  padding-left: 21px; font-size: 26.500px;
}
.combo.plain { padding-left: 18px; }
.cw388 { width: 388px; }
.cw390 { width: 390px; }
.cw390 .cv { right: 8px; }
.badge { display: block; flex: none; width: 27px; height: 27px; margin-right: 8px; border-radius: 4px; color: #fff; font-size: 23px; line-height: 27px; text-align: center; }
.badge.n { background: #d0021b; }
.badge.c { background: #1f9d3a; }
.cv { position: absolute; right: 7px; top: 4px; }
.btn-find { width: 476px; height: 38px; line-height: 38px; margin: 27px 0 0 14px; background: #fff; color: #111; }
.chk-sel { margin: 17px 0 0 109px; }
.srow { display: flex; align-items: center; height: 30px; }
.sr18 { margin-top: 18px; }
.s-label { width: 186px; flex: none; padding: 2px 0 0 1px; }
.slider { display: block; position: relative; width: 312px; height: 6px; border-radius: 3px; background: #aaaaa8; }
.fill { display: block; position: absolute; left: 0; top: 0; height: 6px; border-radius: 3px; background: #3d9bec; }
.f1 { width: 150px; }
.f2 { width: 158px; }
.knob { display: block; position: absolute; top: -12px; width: 30px; height: 30px; border-radius: 50%; background: #fff; box-shadow: 0 1px 2px rgba(0,0,0,.4); }
.k1 { left: 134px; }
.k2 { left: 142px; }
.k3 { left: 0; }
.chk-jit { margin: 18px 0 0 186px; }
.c34 { height: 34px; }
.tool { display: flex; align-items: center; justify-content: center; width: 60px; height: 59px; background: #e3e5e1; border: 2px solid #c5c7c3; }
.tool.sel { background: linear-gradient(#a9a9a7 0 60%, #b8b8b6 60%); border-color: #9c9c9a; }
.t-last { margin-left: 5px; }
.btn-send { width: 456px; }

.sc-frame { flex: none; margin-top: 17px; width: 864px; height: 1233px; padding: 5px; background: #e1e3df; border-radius: 8px; }
.sc-plot { display: block; }

.pts circle { r: 13.300px; stroke-width: 3px; }
.pts.b circle, .lg.b { fill: rgba(85,190,255,.55); stroke: rgba(50,165,225,.85); }
.pts.r circle, .lg.r { fill: rgba(242,85,65,.55); stroke: rgba(215,55,35,.85); }
.pts.g circle, .lg.g { fill: rgba(170,235,40,.55); stroke: rgba(150,218,0,.95); }
.lg { stroke-width: 2px; }
```
